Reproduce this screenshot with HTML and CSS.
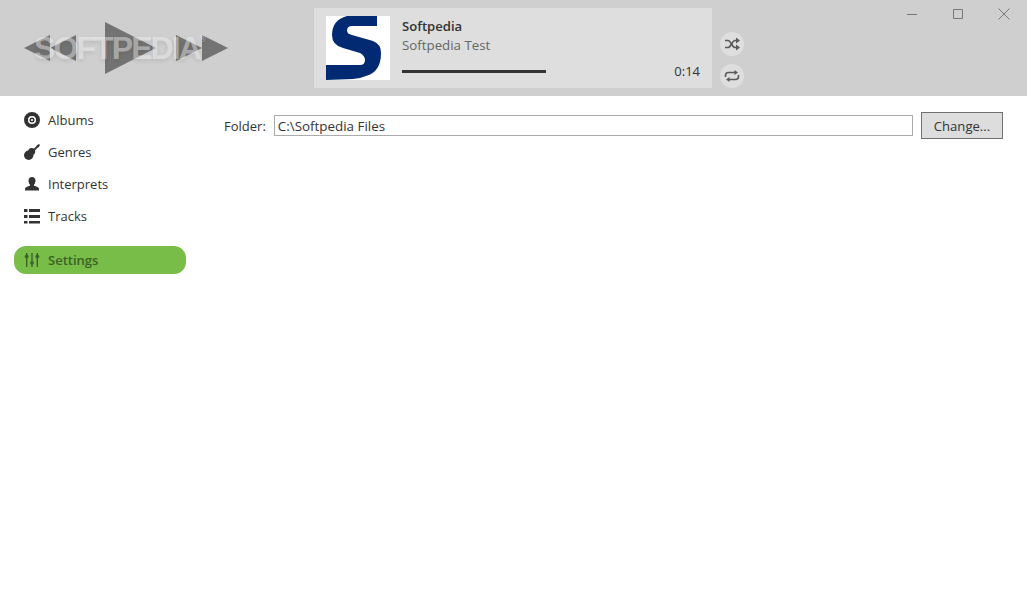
FILE: index.html
```html
<!DOCTYPE html>
<html lang="en">
<head>
    <meta charset="UTF-8">
    <title>Music Player - Settings</title>
    <link rel="stylesheet" href="styles.css">
</head>
<body>
    <div class="topbar">
        <div class="transport">
            <svg class="transport-icons" width="204" height="52" viewBox="0 0 204 52">
                <polygon points="0,26 26,13 26,39"/>
                <polygon points="26,26 52,13 52,39"/>
                <polygon points="81,0 81,52 132,26"/>
                <polygon points="152,13 152,39 178,26"/>
                <polygon points="178,13 178,39 204,26"/>
            </svg>
            <div class="watermark">SOFTPEDIA<sup class="reg">®</sup></div>
        </div>
        <div class="now-playing">
            <div class="cover">
                <svg width="64" height="64" viewBox="0 0 64 64">
                    <path fill="#012a73" d="M21 0H51V10H26Q21 10 21 14.500Q21 18 26 19L47 25Q55 28 55 37Q55 56 40 60Q33 63 27 63L0 64V49H34Q39 49 39 44Q39 40 34 37L17 32Q6 29 6 19Q6 4 21 0Z"/>
                </svg>
            </div>
            <div class="track-info">
                <div class="track-title">Softpedia</div>
                <div class="track-artist">Softpedia Test</div>
                <div class="progress-row">
                    <div class="progress"><div class="progress-fill" style="width: 60%"></div></div>
                    <span class="track-time">0:14</span>
                </div>
            </div>
        </div>
        <div class="play-modes">
            <div class="mode-btn">
                <svg width="16" height="14" viewBox="0 0 16 14" fill="none" stroke="#5a5a5a" stroke-width="1.6">
                    <path d="M1 3.500H4C7 3.500 8 10.500 11 10.500H13"/>
                    <path d="M1 10.500H4C7 10.500 8 3.500 11 3.500H13"/>
                    <path fill="#5a5a5a" stroke="none" d="M12 0.500L16 3.500L12 6.500ZM12 7.500L16 10.500L12 13.500Z"/>
                </svg>
            </div>
            <div class="mode-btn">
                <svg width="16" height="14" viewBox="0 0 16 14" fill="none" stroke="#5a5a5a" stroke-width="1.6">
                    <path d="M1.500 8V6.500Q1.500 3.500 4.500 3.500H11"/>
                    <path d="M14.500 6V7.500Q14.500 10.500 11.500 10.500H5"/>
                    <path fill="#5a5a5a" stroke="none" d="M10.500 1L14 3.500L10.500 6ZM5.500 8L2 10.500L5.500 13Z"/>
                </svg>
            </div>
        </div>
        <div class="window-controls">
            <svg width="10" height="10" viewBox="0 0 10 10"><path d="M0 5.500H10" stroke="#777" fill="none"/></svg>
            <svg width="10" height="10" viewBox="0 0 10 10"><path d="M0.500 0.500H9.500V9.500H0.500Z" stroke="#777" fill="none"/></svg>
            <svg class="close-icon" width="12" height="12" viewBox="0 0 12 12"><path d="M0.500 0.500L11.500 11.500M11.500 0.500L0.500 11.500" stroke="#777" fill="none"/></svg>
        </div>
    </div>

    <div class="content">
        <div class="sidebar">
            <div class="nav-item">
                <svg class="nav-icon" width="16" height="16" viewBox="0 0 16 16">
                    <path fill="#333" fill-rule="evenodd" d="M8 0a8 8 0 1 0 0 16A8 8 0 0 0 8 0ZM8 4a4 4 0 1 1 0 8a4 4 0 0 1 0-8Z"/>
                    <path fill="#333" fill-rule="evenodd" d="M8 5.500a2.500 2.500 0 1 0 0 5a2.500 2.500 0 0 0 0-5ZM8 7a1 1 0 1 1 0 2a1 1 0 0 1 0-2Z"/>
                </svg>
                Albums
            </div>
            <div class="nav-item">
                <svg class="nav-icon" width="16" height="16" viewBox="0 0 16 16">
                    <circle fill="#333" cx="4.700" cy="11.300" r="4.700"/>
                    <circle fill="#333" cx="7.700" cy="7.500" r="3.500"/>
                    <path fill="none" stroke="#333" stroke-width="1.800" d="M8.500 7.500L14 2"/>
                    <path fill="#333" d="M12.500 1.500L15 0L16 1L14.500 3.500Z"/>
                </svg>
                Genres
            </div>
            <div class="nav-item">
                <svg class="nav-icon" width="16" height="16" viewBox="0 0 16 16">
                    <path fill="#333" d="M8 1C10.200 1 11.500 2.600 11.500 4.800C11.500 6.500 10.800 8 10 8.800V9.800C12.500 10.600 15 11.200 15 13V14.500H1V13C1 11.200 3.500 10.600 6 9.800V8.800C5.200 8 4.500 6.500 4.500 4.800C4.500 2.600 5.800 1 8 1Z"/>
                </svg>
                Interprets
            </div>
            <div class="nav-item">
                <svg class="nav-icon" width="16" height="16" viewBox="0 0 16 16">
                    <path fill="#333" d="M0 1H3.500V4H0ZM5 1H16V4H5ZM0 7H3.500V10H0ZM5 7H16V10H5ZM0 13H3.500V15.500H0ZM5 13H16V15.500H5Z"/>
                </svg>
                Tracks
            </div>
            <div class="nav-item nav-item-active">
                <svg class="nav-icon" width="16" height="16" viewBox="0 0 16 16">
                    <path fill="#3a6328" d="M2 6H3.400V15H2ZM7.300 1H8.700V9H7.300ZM12.600 6H14V15H12.600ZM2 1H3.400V3H2ZM7.300 13H8.700V15H7.300ZM12.600 1H14V3H12.600Z"/>
                    <circle fill="#3a6328" cx="2.700" cy="4.400" r="1.900"/>
                    <circle fill="#3a6328" cx="8" cy="11" r="1.900"/>
                    <circle fill="#3a6328" cx="13.300" cy="4.400" r="1.900"/>
                </svg>
                Settings
            </div>
        </div>
        <div class="main">
            <label class="folder-label" for="folder">Folder:</label>
            <input class="folder-input" id="folder" type="text" value="C:\Softpedia Files">
            <button class="change-button">Change...</button>
        </div>
    </div>
</body>
</html>
```

FILE: styles.css
```css
body {
    font-family: "Open Sans", "Noto Sans", Arial, sans-serif;
    font-size: 13px;
    margin: 0;
    padding: 0;
    background-color: #ffffff;
    color: #333333;
    height: 600px;
    overflow: hidden;
}
.topbar {
    height: 96px;
    background-color: #cfcfcf;
    display: flex;
    position: relative;
}
.transport {
    width: 204px;
    height: 52px;
    margin: 22px 0 0 24px;
    position: relative;
}
.transport-icons {
    display: block;
    fill: #737373;
}
.watermark {
    position: absolute;
    left: 10px;
    top: 6px;
    font-family: "Liberation Sans", Arial, sans-serif;
    font-size: 32px;
    font-weight: bold;
    letter-spacing: -1.900px;
    line-height: 40px;
    color: rgba(255, 255, 255, 0.42);
    text-shadow: 0 2px 4px rgba(0, 0, 0, 0.1);
    white-space: nowrap;
}
.reg {
    font-size: 9px;
    font-weight: normal;
    letter-spacing: 0;
    margin-left: -1px;
    vertical-align: 17px;
    line-height: 0;
}
.now-playing {
    width: 398px;
    height: 80px;
    margin: 8px 0 0 86px;
    background-color: #dedede;
    display: flex;
    box-sizing: border-box;
    padding: 8px 12px;
}
.cover {
    width: 64px;
    height: 64px;
    background-color: #ffffff;
    flex: none;
}
.cover svg {
    display: block;
}
.track-info {
    flex: 1;
    min-width: 0;
    margin-left: 12px;
    display: flex;
    flex-direction: column;
}
.track-title {
    font-size: 13.100px;
    font-weight: 600;
    line-height: 20px;
    color: #333333;
}
.track-artist {
    font-size: 13.300px;
    line-height: 18px;
    color: #666666;
}
.progress-row {
    display: flex;
    align-items: center;
    justify-content: space-between;
    margin-top: 7px;
}
.progress {
    width: 240px;
    flex: none;
}
.progress-fill {
    height: 3px;
    background-color: #333333;
}
.track-time {
    line-height: 20px;
}
.play-modes {
    margin: 32px 0 0 8px;
    display: flex;
    flex-direction: column;
    gap: 8px;
}
.mode-btn {
    width: 24px;
    height: 24px;
    border-radius: 50%;
    background-color: #dedede;
    display: flex;
    align-items: center;
    justify-content: center;
}
.window-controls {
    position: absolute;
    top: 9px;
    left: 907px;
    display: flex;
    gap: 36px;
    align-items: flex-start;
}
.close-icon {
    margin: -1px 0 0 -1px;
}
.content {
    display: flex;
}
.sidebar {
    width: 172px;
    margin: 8px 0 0 14px;
    flex: none;
}
.nav-item {
    height: 32px;
    display: flex;
    align-items: center;
    padding-left: 10px;
    color: #333333;
}
.nav-icon {
    margin-right: 8px;
    flex: none;
}
.nav-item-active {
    height: 28px;
    margin-top: 14px;
    background-color: #78bd47;
    border-radius: 12px;
    color: #3a6328;
    font-weight: 600;
}
.main {
    flex: 1;
    display: flex;
    align-items: center;
    height: 27px;
    margin: 16px 24px 0 38px;
}
.folder-label {
    margin-right: 8px;
}
.folder-input {
    flex: 1;
    min-width: 0;
    height: 21px;
    box-sizing: border-box;
    border: 1px solid #ababab;
    padding: 0 3px;
    font-family: inherit;
    font-size: 13.400px;
    color: #333333;
    outline: none;
}
.change-button {
    width: 82px;
    height: 27px;
    margin-left: 8px;
    background-color: #dddddd;
    border: 1px solid #707070;
    font-family: inherit;
    font-size: 13.100px;
    color: #333333;
    padding: 0;
}
```
